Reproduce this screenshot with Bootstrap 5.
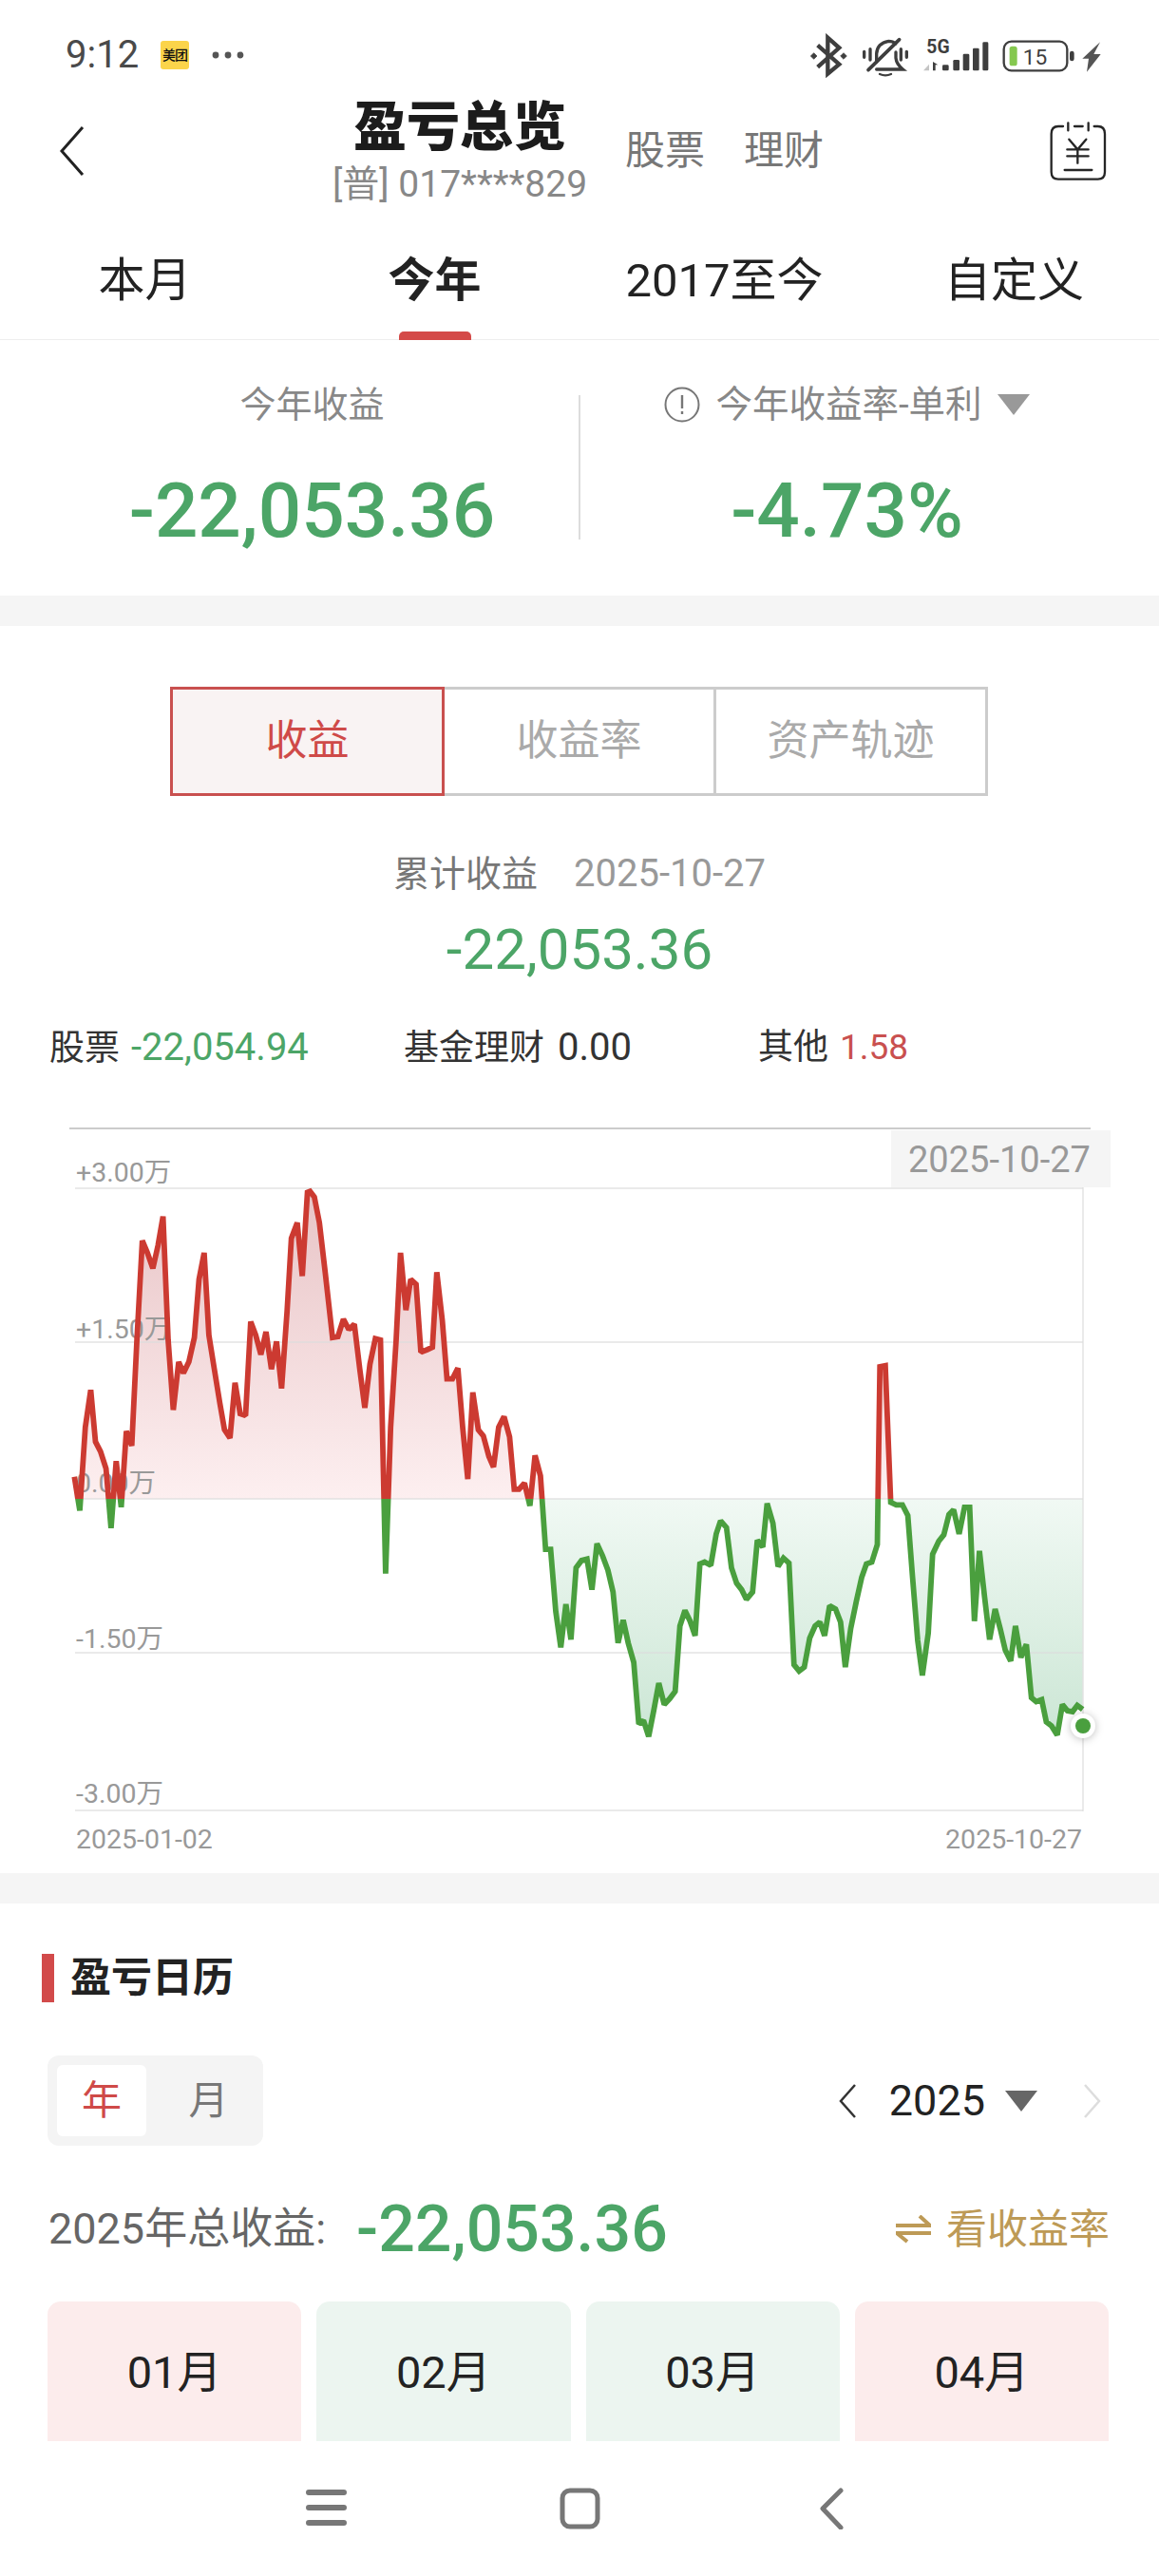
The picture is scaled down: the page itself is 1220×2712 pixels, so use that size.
<!DOCTYPE html>
<html lang="zh-CN">
<head>
<meta charset="utf-8">
<title>盈亏总览</title>
<link href="https://cdn.jsdelivr.net/npm/bootstrap@5.3.0/dist/css/bootstrap.min.css" rel="stylesheet">
<style>
html,body{margin:0;background:#fff}
body{width:1220px;height:2712px;overflow:hidden;font-family:Roboto,"Noto Sans CJK SC",sans-serif;color:#222}
.scrollarea{height:2570px;overflow:hidden}
.statusbar{height:100px;padding:16px 58px 0 69px}
.clock{font-size:40px;line-height:1;color:#4a4a4a;width:100px}
.mt-app{width:30px;height:30px;background:#fbd44a;border-radius:3px;font-size:14px;line-height:30px;text-align:center;color:#111;font-weight:500;white-space:nowrap;letter-spacing:-1px;margin-right:24px}
.headbar{height:118px;padding:0 55px 0 63px}
.titleblock{width:268px;margin-left:261px;text-align:center}
.pagetitle{font-size:56px;line-height:64px;font-weight:900;color:#1c1c1c}
.account{font-size:39px;line-height:46px;color:#888;white-space:nowrap;margin-top:5px}
.subnav{font-size:42px;line-height:50px;color:#777;margin-left:40px;white-space:nowrap}
.subnav+.subnav{margin-left:41px}
.periodtabs{height:140px;border-bottom:1px solid #eee}
.periodtabs .nav-link{position:relative;padding:48px 0 0;font-size:49px;line-height:60px;color:#222;height:140px}
.periodtabs .nav-link.active{font-weight:700;color:#222}
.periodtabs .nav-link.active::after{content:"";position:absolute;left:50%;bottom:0;margin-left:-38px;width:76px;height:9px;background:#d44a48;border-radius:5px 5px 0 0}
.summary{height:269px}
.sumcol{flex:1 1 0;padding-top:46px;text-align:center}
.sumcol.leftcol{padding-left:48px}
.sumcol.rightcol{padding-right:48px}
.sumlabel{font-size:38px;line-height:44px;color:#888;white-space:nowrap}
.sumlabelwide{font-size:38.5px}
.sumvalue{font-size:80px;line-height:100px;margin-top:40px;color:#4ca567;font-weight:500;white-space:nowrap}
.sumdivider{width:2px;height:152px;margin-top:58px;background:#ddd}
.gapband{height:32px;background:#f5f5f5}
.chartsection{height:1313px}
.segbar{--bs-border-width:3px;margin:64px 0 0 179px;display:inline-flex}
.segbar .btn{--bs-btn-border-width:3px;--bs-btn-border-radius:0;--bs-btn-bg:#fff;--bs-btn-border-color:#ccc;--bs-btn-color:#aaa;--bs-btn-font-size:44px;--bs-btn-line-height:1.2;--bs-btn-active-bg:#f9f3f3;--bs-btn-active-border-color:#c9504f;--bs-btn-active-color:#cf4a48;--bs-btn-hover-bg:#fff;--bs-btn-hover-color:#aaa;width:289px;height:115px;display:flex;align-items:center;justify-content:center;padding:0;white-space:nowrap}
.cumline{margin-top:57px;font-size:38px;line-height:50px;color:#777}
.cumline .cumdate{color:#999;margin-left:38px;font-size:40px}
.cumvalue{margin-top:20px;font-size:60px;line-height:70px;color:#4ca567;text-align:center}
.breakdown{margin-top:45px;padding-left:52px;font-size:37px;line-height:46px;color:#333;white-space:nowrap}
.breakitem{width:373px;flex:none}
.greentxt{color:#4ca567;margin-left:12px;font-size:40px}
.plainnum{margin-left:14px;font-size:40px}
.redtxt{color:#c9504f;margin-left:12px;font-size:37px}
.chartsvg{display:block;margin-top:54px;width:1220px;height:780px}
.chartsvg text{font-family:Roboto,"Noto Sans CJK SC",sans-serif;fill:#999;font-size:28.5px}
.chartsvg text.badgetxt{font-size:38px}
.enddot{filter:drop-shadow(0 1px 4px rgba(0,0,0,.25))}
.calendarsection{padding-top:53px}
.calhead{padding-left:44px;height:51px}
.calbar{width:13px;height:51px;background:#d24a4a;margin-right:17px}
.caltitle{font-size:43px;line-height:51px;font-weight:700;color:#222}
.ctrlrow{margin-top:56px;padding:0 60px 0 50px;height:95px}
.yearmonth{width:227px;height:95px;background:#f4f4f4;border-radius:12px;padding:10px 0 10px 10px;font-size:42px}
.ymactive{width:94px;height:75px;line-height:75px;background:#fff;border-radius:6px;color:#cf4a48;text-align:center}
.ymother{width:123px;padding-left:8px;line-height:75px;color:#777;text-align:center}
.yearnum{font-size:45px;line-height:60px;color:#222;margin:0 21px 0 34px}
.totalrow{margin-top:53px;padding:0 52px 0 51px;height:70px}
.totallabel{font-size:45px;line-height:70px;color:#666;white-space:nowrap}
.totalvalue{font-size:68px;line-height:70px;color:#4ca567;font-weight:500;margin-left:32px;white-space:nowrap}
.viewrate{font-size:43px;line-height:70px;color:#bd9a56;white-space:nowrap}
.monthgrid{display:grid;grid-template-columns:repeat(4,1fr);column-gap:16px;margin-top:41px;padding:0 53px 0 50px}
.monthcell{height:200px;border-radius:14px 14px 0 0;padding-top:51px;text-align:center;font-size:47px;line-height:48px;color:#222}
.monthcell.upcell{background:#fcecec}
.monthcell.downcell{background:#ecf5f0}
.sysnav{height:142px;gap:222px}
</style>
</head>
<body>
<div class="scrollarea">
  <div class="statusbar d-flex align-items-center">
    <div class="clock">9:12</div>
    <div class="mt-app">美团</div>
    <svg width="34" height="8" viewBox="0 0 34 8" aria-hidden="true"><circle cx="4" cy="4" r="3.4" fill="#555"/><circle cx="17" cy="4" r="3.4" fill="#555"/><circle cx="30" cy="4" r="3.4" fill="#555"/></svg>
    <svg class="ms-auto" width="310" height="47" viewBox="100 100 930 141" aria-hidden="true">
      <g fill="none" stroke="#3e3e3e" stroke-width="13">
        <path d="M126 138L194 198 158 228V114L194 146 126 207"/>
        <path d="M104 172l10-10 10 10-10 10zM198 172l10-10 10 10-10 10z" fill="#3e3e3e" stroke-width="2"/>
      </g>
      <g fill="none" stroke="#3e3e3e" stroke-width="10" stroke-linecap="round">
        <path d="M273 158v18M292 150v34M389 150v34M407 158v18"/>
        <path d="M312 190V165q2-34 38-40 14 0 22 8M373 160v18q2 20 22 36H312"/>
        <path d="M286 216L384 120" stroke-width="11"/>
        <path d="M322 229q18 8 36 0" stroke-width="7"/>
      </g>
      <text x="470" y="164" font-family="Roboto,sans-serif" font-size="58" font-weight="700" fill="#3e3e3e">5G</text>
      <path d="M478 198v20h-18z" fill="#c4c4c4"/>
      <path d="M490 190l16 10h-8v18h-8z" fill="#3e3e3e"/>
      <g fill="#3e3e3e"><rect x="520" y="200" width="20" height="18" rx="4"/><rect x="554" y="184" width="20" height="34" rx="4"/><rect x="585" y="165" width="20" height="53" rx="4"/><rect x="616" y="147" width="20" height="71" rx="4"/><rect x="647" y="128" width="18" height="90" rx="4"/></g>
      <rect x="714" y="126" width="200" height="92" rx="24" fill="none" stroke="#3e3e3e" stroke-width="7"/>
      <rect x="732" y="141" width="24" height="62" rx="8" fill="#85c84f"/>
      <text x="774" y="199" font-family="Roboto,sans-serif" font-size="68" fill="#3e3e3e">15</text>
      <rect x="922" y="156" width="14" height="32" rx="7" fill="#3e3e3e"/>
      <path d="M1018 128L962 180h20l-6 42 44-56h-22z" fill="#555"/>
    </svg>
  </div>

  <div class="headbar d-flex align-items-center">
    <svg width="26" height="54" viewBox="0 0 26 54" aria-hidden="true"><path d="M24 2L2 27l22 25" fill="none" stroke="#222" stroke-width="3"/></svg>
    <div class="titleblock">
      <div class="pagetitle">盈亏总览</div>
      <div class="account">[普] 017****829</div>
    </div>
    <div class="subnav">股票</div>
    <div class="subnav">理财</div>
    <svg class="ms-auto" width="60" height="64" viewBox="858 378 180 192" aria-hidden="true">
      <g fill="none" stroke="#262626" stroke-width="7" stroke-linecap="round">
        <path d="M900 396H885Q863 396 863 420V540Q863 563 885 563H1010Q1032 563 1032 540V420Q1032 396 1010 396H998"/>
        <path d="M916 385v24M980 385v24M936 396h26"/>
        <path d="M919 437l27 32 27-32M913 469h67M913 490h67M946 469v43M905 534h86"/>
      </g>
    </svg>
  </div>

  <nav class="nav nav-justified periodtabs">
    <a class="nav-link" href="#">本月</a>
    <a class="nav-link active" href="#">今年</a>
    <a class="nav-link" href="#">2017至今</a>
    <a class="nav-link" href="#">自定义</a>
  </nav>

  <div class="summary d-flex">
    <div class="sumcol leftcol">
      <div class="sumlabel">今年收益</div>
      <div class="sumvalue">-22,053.36</div>
    </div>
    <div class="sumdivider"></div>
    <div class="sumcol rightcol">
      <div class="sumlabel sumlabelwide d-flex align-items-center justify-content-center gap-3">
        <svg width="38" height="38" viewBox="0 0 38 38" aria-hidden="true"><circle cx="19" cy="19" r="17.5" fill="none" stroke="#777" stroke-width="2"/><path d="M19 9v14M19 26v3" stroke="#777" stroke-width="2.4"/></svg>
        <span>今年收益率-单利</span>
        <svg width="34" height="22" viewBox="0 0 34 22" aria-hidden="true"><path d="M0 0h34L17 22z" fill="#999"/></svg>
      </div>
      <div class="sumvalue">-4.73%</div>
    </div>
  </div>

  <div class="gapband"></div>

  <div class="chartsection">
    <div class="btn-group segbar" role="group">
      <button type="button" class="btn active">收益</button>
      <button type="button" class="btn">收益率</button>
      <button type="button" class="btn">资产轨迹</button>
    </div>
    <div class="cumline text-center">累计收益<span class="cumdate">2025-10-27</span></div>
    <div class="cumvalue">-22,053.36</div>
    <div class="breakdown d-flex">
      <div class="breakitem">股票<span class="greentxt">-22,054.94</span></div>
      <div class="breakitem">基金理财<span class="plainnum">0.00</span></div>
      <div>其他<span class="redtxt">1.58</span></div>
    </div>
    <svg class="chartsvg" viewBox="0 1180 1220 780" aria-label="收益曲线">
      <defs>
        <linearGradient id="redfill" gradientUnits="userSpaceOnUse" x1="0" y1="1250" x2="0" y2="1577"><stop offset="0" stop-color="#e8c4c6"/><stop offset="1" stop-color="#fdeff0"/></linearGradient>
        <linearGradient id="greenfill" gradientUnits="userSpaceOnUse" x1="0" y1="1577" x2="0" y2="1815"><stop offset="0" stop-color="#f1f9f4"/><stop offset="1" stop-color="#cde7d6"/></linearGradient>
        <clipPath id="above"><rect x="0" y="1180" width="1220" height="397"/></clipPath>
        <clipPath id="below"><rect x="0" y="1577" width="1220" height="383"/></clipPath>
      </defs>
      <polygon id="fillred" fill="url(#redfill)" clip-path="url(#above)"/>
      <polygon id="fillgreen" fill="url(#greenfill)" clip-path="url(#below)"/>
      <rect x="73" y="1186" width="1075" height="2" fill="#ccc"/>
      <g fill="#dcdcdc" fill-opacity=".6">
        <rect x="79" y="1249" width="1061" height="2"/>
        <rect x="79" y="1411" width="1061" height="2"/>
        <rect x="79" y="1576" width="1061" height="2"/>
        <rect x="79" y="1738" width="1061" height="2"/>
        <rect x="79" y="1904" width="1061" height="2"/>
        <rect x="1139" y="1249" width="2" height="657"/>
      </g>
      <rect x="938" y="1189" width="231" height="60" fill="#f5f5f5"/>
      <text class="badgetxt" x="956" y="1233">2025-10-27</text>
      <text x="80" y="1243">+3.00万</text>
      <text x="80" y="1408">+1.50万</text>
      <text x="80" y="1570">0.00万</text>
      <text x="80" y="1734">-1.50万</text>
      <text x="80" y="1897">-3.00万</text>
      <text x="80" y="1945">2025-01-02</text>
      <text x="1139" y="1945" text-anchor="end">2025-10-27</text>
      <polyline id="linered" fill="none" stroke="#cc3a31" stroke-width="5.8" stroke-linejoin="miter" stroke-miterlimit="1.6" clip-path="url(#above)"/>
      <polyline id="linegreen" fill="none" stroke="#4a9f3e" stroke-width="5.8" stroke-linejoin="miter" stroke-miterlimit="1.6" clip-path="url(#below)"/>
      <circle class="enddot" cx="1140" cy="1816" r="13" fill="#fff"/>
      <circle cx="1140" cy="1816" r="8" fill="#4a9f3e"/>
    </svg>
  </div>

  <div class="gapband"></div>

  <div class="calendarsection">
    <div class="calhead d-flex align-items-center">
      <div class="calbar"></div>
      <div class="caltitle">盈亏日历</div>
    </div>
    <div class="ctrlrow d-flex align-items-center justify-content-between">
      <div class="yearmonth d-flex">
        <div class="ymactive">年</div>
        <div class="ymother">月</div>
      </div>
      <div class="d-flex align-items-center">
        <svg width="20" height="38" viewBox="0 0 20 38" aria-hidden="true"><path d="M18 2L3 19l15 17" fill="none" stroke="#333" stroke-width="2.5"/></svg>
        <div class="yearnum">2025</div>
        <svg width="34" height="22" viewBox="0 0 34 22" aria-hidden="true"><path d="M0 0h34L17 22z" fill="#666"/></svg>
        <svg class="ms-5" width="20" height="38" viewBox="0 0 20 38" aria-hidden="true"><path d="M2 2l15 17L2 36" fill="none" stroke="#ddd" stroke-width="2.5"/></svg>
      </div>
    </div>
    <div class="totalrow d-flex align-items-center">
      <div class="totallabel">2025年总收益:</div>
      <div class="totalvalue">-22,053.36</div>
      <div class="viewrate ms-auto d-flex align-items-center gap-3">
        <svg width="37" height="30" viewBox="0 0 37 30" aria-hidden="true"><path d="M0 11h36L25 1M37 19H1l11 9" fill="none" stroke="#bd9a56" stroke-width="4"/></svg>
        <span>看收益率</span>
      </div>
    </div>
    <div class="monthgrid">
      <div class="monthcell upcell">01月</div>
      <div class="monthcell downcell">02月</div>
      <div class="monthcell downcell">03月</div>
      <div class="monthcell upcell">04月</div>
    </div>
  </div>
</div>

<div class="sysnav d-flex align-items-center justify-content-center">
  <svg width="44" height="44" viewBox="0 0 44 44" aria-hidden="true"><path d="M3 5h37M3 21h37M3 37h37" stroke="#777" stroke-width="6" stroke-linecap="round"/></svg>
  <svg width="44" height="44" viewBox="0 0 44 44" aria-hidden="true"><rect x="4" y="3" width="37" height="38" rx="8" fill="none" stroke="#777" stroke-width="5"/></svg>
  <svg width="44" height="44" viewBox="0 0 44 44" aria-hidden="true"><path d="M31 3L12 22l19 20" fill="none" stroke="#777" stroke-width="5" stroke-linecap="round" stroke-linejoin="round"/></svg>
</div>

<script src="https://cdn.jsdelivr.net/npm/bootstrap@5.3.0/dist/js/bootstrap.bundle.min.js"></script>
<script>
var leftTrace=[100,752,115,822,130,650,145,573,158,680,172,700,187,735,201,858,215,720,229,815,243,658,258,688,272,470,287,265,301,290,316,322,330,275,344,215,358,470,372,614,387,515,400,538,415,515,430,465,443,345,457,290,470,460,485,530,500,600,513,655,528,672,542,558,556,622,571,626,585,432,599,460,613,500,627,453,642,530,656,473,670,570,685,410,697,260,713,228,727,338,741,165,748,163,760,175,774,228,790,330,810,465,825,463,840,427,855,448,870,437,885,530,899,610,913,520,928,467,942,470,956,952,970,650,985,470,997,290,1012,408,1025,345,1040,355,1053,495,1070,490,1085,485,1097,330,1112,430,1125,550,1140,550,1155,528,1168,650,1182,757,1196,578,1211,655,1225,668,1240,710,1253,732,1267,650,1282,628,1297,670,1310,778,1323,778,1338,765,1353,812,1367,708,1382,750,1396,902,1410,902,1424,1030,1438,1104,1452,1015,1466,1088,1480,940,1495,925,1510,922];
var rightTrace=[8,985,22,890,37,915,52,945,66,990,80,1095,94,1048,108,1095,123,1135,137,1262,150,1255,164,1288,178,1235,192,1178,207,1222,222,1210,237,1195,250,1060,264,1028,278,1050,292,1080,305,932,318,928,335,935,350,870,362,843,378,857,392,940,406,972,420,985,433,1005,450,990,463,883,478,897,490,807,506,848,520,937,535,920,550,930,564,1140,578,1153,592,1145,607,1085,622,1060,635,1052,648,1080,662,1018,678,1025,692,1052,705,1145,720,1065,735,1010,750,960,763,932,778,928,793,892,800,525,815,523,830,805,845,810,862,810,877,832,890,960,904,1090,917,1162,933,1075,945,912,962,885,976,872,990,830,1003,820,1018,870,1033,815,1047,815,1060,1050,1074,905,1088,1000,1102,1088,1117,1025,1131,1065,1145,1110,1160,1132,1173,1060,1188,1125,1203,1098,1217,1208,1230,1216,1245,1212,1258,1258,1272,1266,1288,1285,1302,1222,1316,1235,1330,1237,1343,1224,1358,1232];
var pts=[],i;
for(i=0;i<leftTrace.length;i+=2){pts.push((40+leftTrace[i]/2.613).toFixed(1)+','+(1170+leftTrace[i+1]/1.96).toFixed(1));}
for(i=0;i<rightTrace.length;i+=2){pts.push((620+rightTrace[i]/2.613).toFixed(1)+','+(1170+rightTrace[i+1]/1.96).toFixed(1));}
var line=pts.join(' ');
var firstX=pts[0].split(',')[0],lastX=pts[pts.length-1].split(',')[0];
var area=firstX+',1577 '+line+' '+lastX+',1577';
document.getElementById('linered').setAttribute('points',line);
document.getElementById('linegreen').setAttribute('points',line);
document.getElementById('fillred').setAttribute('points',area);
document.getElementById('fillgreen').setAttribute('points',area);
</script>
</body>
</html>
